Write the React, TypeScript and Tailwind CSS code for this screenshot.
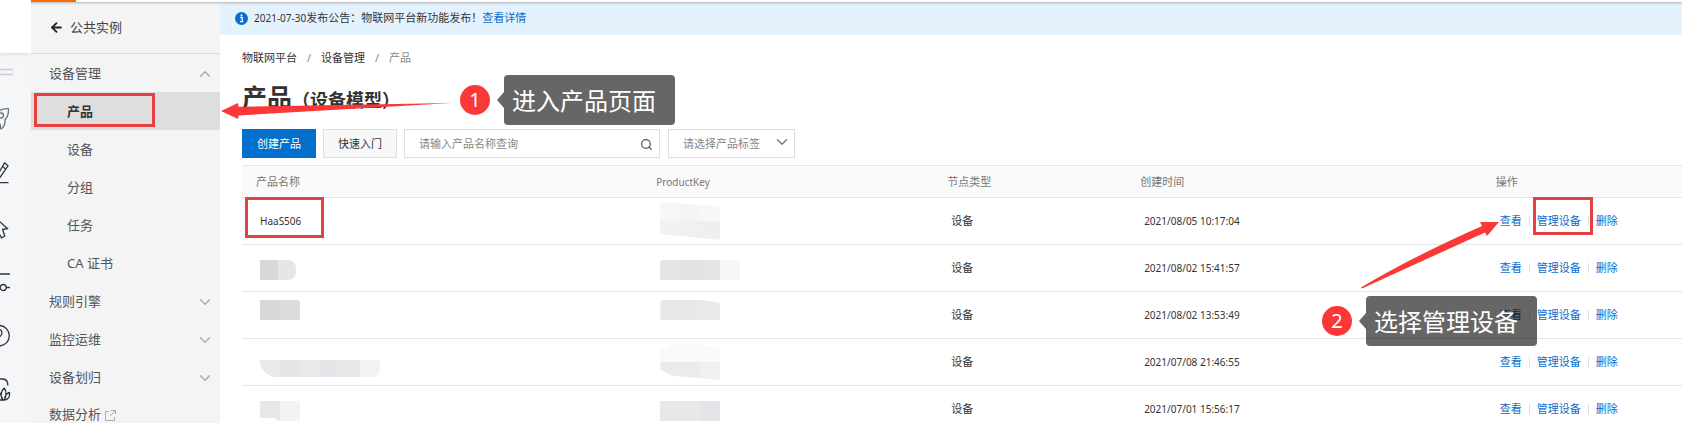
import React from "react";
import { ArrowLeft, ChevronDown, ChevronUp, Search } from "lucide-react";

const subItems = ["产品", "设备", "分组", "任务", "CA 证书"];
const groups = ["规则引擎", "监控运维", "设备划归"];

type Patch = { box: string; tiles: string[] };
type Row = { name?: string; namePatch?: Patch; keyPatch: Patch; time: string };

const rows: Row[] = [
  {
    name: "HaaS506",
    keyPatch: {
      box: "h-[38px] w-[60px] grid-cols-3 [clip-path:polygon(0_0,100%_12%,100%_100%,0_84%)]",
      tiles: ["bg-[#f7f7f7]", "bg-[#f6f4f5]", "bg-[#f5f7f9]", "bg-[#f1f1f1]", "bg-[#f0f0f0]", "bg-[#eef0f0]"],
    },
    time: "2021/08/05 10:17:04",
  },
  {
    namePatch: { box: "mt-1 h-5 w-9 grid-cols-2 rounded-r-lg", tiles: ["bg-[#d9d7d8]", "bg-[#e6e6e9]"] },
    keyPatch: {
      box: "mt-1 h-5 w-20 grid-cols-4 rounded-tl",
      tiles: ["bg-[#e6e4e5]", "bg-[#e3e3e3]", "bg-[#e4e4e6]", "bg-[#f6f6f6]"],
    },
    time: "2021/08/02 15:41:57",
  },
  {
    namePatch: { box: "mb-2.5 h-5 w-10 grid-cols-2 rounded-tr", tiles: ["bg-[#d8d8d8]", "bg-[#dcdcdc]"] },
    keyPatch: {
      box: "mb-2.5 h-5 w-[60px] grid-cols-3 rounded-tl [clip-path:polygon(0_0,70%_0,100%_15%,100%_100%,0_100%)]",
      tiles: ["bg-[#e8e8e8]", "bg-[#e8e8ea]", "bg-[#e9e9e9]"],
    },
    time: "2021/08/02 13:53:49",
  },
  {
    namePatch: {
      box: "mt-3 h-[17px] w-[120px] grid-cols-6 rounded-bl-2xl rounded-br-lg",
      tiles: ["bg-[#e9e9e9]", "bg-[#e6e6e6]", "bg-[#e9e9e9]", "bg-[#e6e6ea]", "bg-[#e7e7e7]", "bg-[#f2f2f2]"],
    },
    keyPatch: {
      box: "h-9 w-[60px] grid-cols-3 [clip-path:polygon(0_15%,20%_0,60%_0,100%_12%,100%_100%,20%_88%,0_72%)]",
      tiles: ["bg-[#f9f9f9]", "bg-[#f9f9f9]", "bg-[#fafafa]", "bg-[#ebebeb]", "bg-[#ebebeb]", "bg-[#f0f0f0]"],
    },
    time: "2021/07/08 21:46:55",
  },
  {
    namePatch: {
      box: "mt-1 h-5 w-10 grid-cols-2 [clip-path:polygon(0_0,100%_0,100%_100%,50%_100%,35%_85%,0_85%)]",
      tiles: ["bg-[#e7e7e5]", "bg-[#f3f3f3]"],
    },
    keyPatch: { box: "mt-1 h-5 w-[60px] grid-cols-3", tiles: ["bg-[#e8e8e8]", "bg-[#e8e8e8]", "bg-[#e5e5e9]"] },
    time: "2021/07/01 15:56:17",
  },
];

function Mosaic({ box, tiles }: Patch) {
  return (
    <div className={`grid auto-rows-fr overflow-hidden ${box}`} aria-hidden="true">
      {tiles.map((t, i) => (
        <span key={i} className={t} />
      ))}
    </div>
  );
}

function Rail() {
  return (
    <div className="flex w-[31px] shrink-0 flex-col bg-[#f5f6f8]">
      <div className="h-[53px] shrink-0 bg-white shadow-[0_1px_4px_rgba(0,0,0,0.12)]" />
      <svg className="h-[370px] w-[31px] shrink-0" viewBox="0 53 31 370" fill="none" stroke="#30343c" strokeWidth="1.3" strokeLinecap="round" strokeLinejoin="round">
        <path d="M0 69.5H13M0 74.5H13" stroke="#c9cbce" strokeLinecap="butt" />
        <g stroke="#6b7080">
          <path d="M0 110.5C2 108.8 5 108.5 8.400 108.700C8.800 113 8 116.500 5 119.800C5.300 124 4 127 1 129C0.300 127 0.500 125.500 0 124" />
          <circle cx="1" cy="115.500" r="2.500" />
        </g>
        <path d="M0 171L4.500 162.800L8 165.800L0 177.500M2.500 166.500L5.800 169.200M0 182.700H8" />
        <path d="M0 222L7.700 228.700L2.600 229.500L4.800 236L1.500 238L0 235" />
        <path d="M0 274H9.500M6.500 287.500H9.500" />
        <circle cx="3.200" cy="287.500" r="3" />
        <path d="M0 325.500A10.300 10.300 0 0 1 0 346M0 329.500C2.800 331 2.300 335 0 336.500" />
        <path d="M0 379H3.500Q8 380 7.800 385M2.500 400C0 396 1.500 390 4.200 388C6.800 391 6.500 395 4.500 400M4.500 400C4.500 396 7 393 9.500 392.500C10 397 8 400 4.500 400M3 400L0 393M0 400H4" />
      </svg>
    </div>
  );
}

function Sidebar() {
  return (
    <aside className="flex w-[189px] shrink-0 flex-col bg-[#f4f4f4] text-[13px] text-[#555]">
      <div className="flex h-[54px] shrink-0 items-center gap-1.5 border-b border-[#dcdcdc] pl-[18px] pt-0.5 text-[#444]">
        <button aria-label="返回" className="flex text-[#222]">
          <ArrowLeft size={15} strokeWidth={3} />
        </button>
        <span>公共实例</span>
      </div>
      <nav>
        <button className="flex h-[38px] w-full items-center justify-between pt-0.5 pr-1.5 pl-[18px]">
          设备管理
          <ChevronUp size={18} strokeWidth={1.8} className="text-[#aaa]" />
        </button>
        {subItems.map((item, i) => (
          <a
            key={item}
            href="#"
            className={`flex h-[38px] items-center pt-0.5 pl-9 ${i === 0 ? "bg-[#dedede] font-bold text-[#333]" : ""}`}
          >
            {item}
          </a>
        ))}
        {groups.map((item) => (
          <button key={item} className="flex h-[38px] w-full items-center justify-between pt-0.5 pr-1.5 pl-[18px]">
            {item}
            <ChevronDown size={18} strokeWidth={1.8} className="text-[#aaa]" />
          </button>
        ))}
        <a href="#" className="flex h-[38px] items-center gap-1 pl-[18px]">
          数据分析
          <svg width="11" height="11" viewBox="0 0 11 11" fill="none" stroke="#aaa">
            <path d="M4 1.500H0.500V10.500H9.500V7M6 0.500H10.500V4M10 1L5 6" />
          </svg>
        </a>
      </nav>
    </aside>
  );
}

function Callout({ n, text }: { n: string; text: string }) {
  return (
    <div className="flex items-center text-white">
      <span className="flex size-[30px] items-center justify-center rounded-full bg-[#fb3838] text-[20px] leading-none">{n}</span>
      <svg className="ml-[7px]" width="7" height="16" viewBox="0 0 7 16">
        <path d="M7 0V16L0 8Z" fill="#000" fillOpacity="0.6" />
      </svg>
      <span className="flex h-[50px] w-[171px] items-center rounded bg-black/60 pt-0.5 pl-2 text-[24px] whitespace-nowrap">{text}</span>
    </div>
  );
}

export default function App() {
  return (
    <div className="relative flex h-screen overflow-hidden bg-white font-['Noto_Sans','Noto_Sans_CJK_SC',sans-serif] text-[11px] text-[#333]">
      <Rail />
      <Sidebar />
      <main className="min-w-0 flex-1">
        <div className="flex h-[35px] items-center bg-[#e4f2fe] pl-[15px] pt-0.5">
          <svg width="13" height="13" viewBox="0 0 13 13">
            <circle cx="6.500" cy="6.500" r="6.500" fill="#0a6dcc" />
            <path d="M5.200 5.500H7.200V9.500M5 9.700H8.300" stroke="#fff" strokeWidth="1.300" fill="none" />
            <circle cx="6.500" cy="3.300" r="1" fill="#fff" />
          </svg>
          <p className="ml-1.5">
            <time className="text-[10px]">2021-07-30</time>发布公告：物联网平台新功能发布！
            <a href="#" className="text-[#0a6dcc]">查看详情</a>
          </p>
        </div>

        <div className="pl-[22px]">
          <nav className="flex h-11 items-center pt-0.5">
            <a href="#">物联网平台</a>
            <span className="w-6 text-center text-[#888]">/</span>
            <a href="#">设备管理</a>
            <span className="w-6 text-center text-[#888]">/</span>
            <span className="text-[#888]">产品</span>
          </nav>
          <h1 className="flex h-[50px] items-baseline text-[25px] leading-9 font-bold">
            产品<small className="text-[18px]">（设备模型）</small>
          </h1>

          <div className="flex h-9 items-start">
            <button className="h-[29px] w-[74px] bg-[#0070cc] pt-0.5 text-white">创建产品</button>
            <button className="ml-[7px] h-[29px] w-[74px] border border-[#dedede] bg-[#f8f8f8] pt-0.5">快速入门</button>
            <label className="ml-[7px] flex h-[29px] w-64 items-center border border-[#dedede] pt-0.5 pr-1.5 pl-3.5">
              <input aria-label="产品名称" placeholder="请输入产品名称查询" className="min-w-0 flex-1 outline-none placeholder:text-[#888]" />
              <Search size={13} strokeWidth={2.2} className="text-[#555]" />
            </label>
            <div className="relative ml-2">
              <select aria-label="产品标签" className="h-[29px] w-[127px] appearance-none border border-[#dedede] pt-0.5 pl-3.5 text-[#888]">
                <option>请选择产品标签</option>
              </select>
              <ChevronDown size={18} strokeWidth={1.8} className="pointer-events-none absolute top-1 right-1 text-[#777]" />
            </div>
          </div>

          <table className="w-full table-fixed border-separate border-spacing-0 text-left">
            <thead>
              <tr className="h-[33px] bg-[#fafafa] text-[#777]">
                <th className="w-[27.8%] border-y border-[#e6e6e6] pt-0.5 pl-3.5 font-normal">产品名称</th>
                <th className="w-[20.2%] border-y border-[#e6e6e6] pt-0.5 pl-3.5 text-[10px] font-normal">ProductKey</th>
                <th className="w-[13.4%] border-y border-[#e6e6e6] pt-0.5 pl-3.5 font-normal">节点类型</th>
                <th className="w-[24.7%] border-y border-[#e6e6e6] pt-0.5 pl-3.5 font-normal">创建时间</th>
                <th className="border-y border-[#e6e6e6] pt-0.5 pl-3.5 font-normal">操作</th>
              </tr>
            </thead>
            <tbody>
              {rows.map((r) => (
                <tr key={r.time} className="h-[47px]">
                  <td className="border-b border-[#e6e6e6] pl-[18px] text-[10px]">
                    {r.name}
                    {r.namePatch && <Mosaic {...r.namePatch} />}
                  </td>
                  <td className="border-b border-[#e6e6e6] pl-[18px]">
                    <Mosaic {...r.keyPatch} />
                  </td>
                  <td className="border-b border-[#e6e6e6] pl-[18px]">设备</td>
                  <td className="border-b border-[#e6e6e6] pl-[18px] text-[10px]">{r.time}</td>
                  <td className="border-b border-[#e6e6e6] pl-[18px]">
                    <div className="flex items-center text-[#0a6dcc]">
                      <a href="#">查看</a>
                      <span className="mx-[7px] h-2.5 w-px bg-[#ddd]" />
                      <a href="#">管理设备</a>
                      <span className="mx-[7px] h-2.5 w-px bg-[#ddd]" />
                      <a href="#">删除</a>
                    </div>
                  </td>
                </tr>
              ))}
            </tbody>
          </table>
        </div>
      </main>

      <div className="absolute top-0 right-0 left-[31px] h-[3px] border-b border-[#c4c8cc] bg-white shadow-[0_1px_2px_rgba(0,0,0,0.12)]">
        <div className="h-0.5 w-[45px] bg-[#ff6a00]" />
      </div>

      <div className="pointer-events-none absolute top-[93px] left-[34px] h-[34px] w-[121px] border-3 border-[#e64141]" />
      <div className="pointer-events-none absolute top-[197px] left-[245px] h-[41px] w-[79px] border-3 border-[#e64141]" />
      <div className="pointer-events-none absolute top-[197px] left-[1533px] h-[38px] w-[60px] border-3 border-[#e64141]" />
      <svg className="pointer-events-none absolute top-[100px] left-[220px]" width="236" height="22" viewBox="220 100 236 22" fill="#fb3838">
        <path d="M221 111L238 103L238.500 106.700L452 103L238.500 115.500L238 119Z" />
      </svg>
      <svg className="pointer-events-none absolute top-[218px] left-[1358px]" width="144" height="74" viewBox="1358 218 144 74" fill="#fb3838">
        <path d="M1499 222L1480 222L1482 226Q1410 258 1361 287.500L1362 288.500Q1420 262 1485 232.500L1487 236Z" />
      </svg>
      <div className="absolute top-[75px] left-[460px]">
        <Callout n="1" text="进入产品页面" />
      </div>
      <div className="absolute top-[296px] left-[1322px]">
        <Callout n="2" text="选择管理设备" />
      </div>
    </div>
  );
}
